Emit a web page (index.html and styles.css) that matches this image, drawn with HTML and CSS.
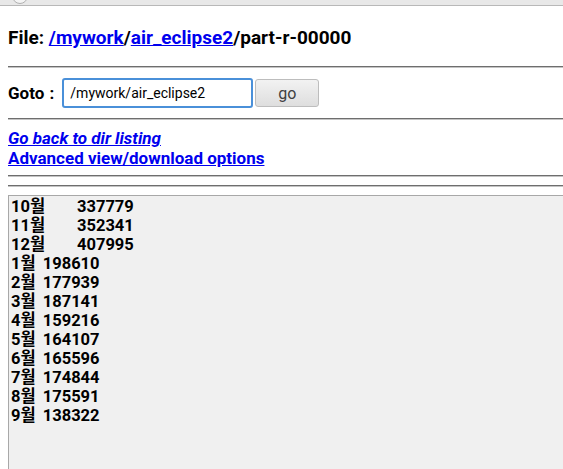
FILE: index.html
```html
<!DOCTYPE html>
<html lang="ko">
<head>
<meta charset="utf-8">
<title>part-r-00000</title>
<link rel="stylesheet" href="styles.css">
</head>
<body>
<div class="chrome"><span class="chrome-dot"></span></div>
<main class="page">
  <h1 class="title">File: <a href="#">/mywork</a>/<a href="#">air_eclipse2</a>/part-r-00000</h1>
  <hr class="rule rule-a">
  <form class="goto">
    <label class="goto-label" for="dir">Goto :</label>
    <input class="goto-input" id="dir" type="text" value="/mywork/air_eclipse2">
    <button class="goto-btn" type="button">go</button>
  </form>
  <hr class="rule rule-b">
  <div class="links">
    <a class="link-back" href="#">Go back to dir listing</a>
    <a class="link-adv" href="#">Advanced view/download options</a>
  </div>
  <hr class="rule rule-c">
  <hr class="rule rule-d">
  <pre class="content">10월	337779
11월	352341
12월	407995
1월 198610
2월 177939
3월 187141
4월 159216
5월 164107
6월 165596
7월 174844
8월 175591
9월 138322
</pre>
</main>
</body>
</html>
```
FILE: styles.css
```css
html, body {
  margin: 0;
  padding: 0;
  background: #ffffff;
  overflow: hidden;
}
body {
  font-family: Roboto, "Noto Sans CJK KR", sans-serif;
  color: #000;
}
.chrome {
  height: 5px;
  background: #e8e8e8;
  border-bottom: 1px solid #b8b8b8;
  position: relative;
  overflow: hidden;
}
.chrome-dot {
  position: absolute;
  left: 12px;
  top: -12px;
  width: 14px;
  height: 14px;
  border: 1px solid #b0b0b0;
  border-radius: 50%;
  background: #f4f4f4;
}
.page {
  padding-left: 8px;
}
.title {
  margin: 20px 0 0 0;
  font-size: 19px;
  line-height: 24px;
  font-weight: bold;
}
.title a { color: #0000ee; }
.rule {
  margin: 0;
  height: 0;
  border: 0;
  border-top: 1px solid #6e6e6e;
  border-bottom: 1px solid #c4c4c4;
}
.rule-a { margin-top: 16px; }
.goto {
  margin: 10px 0 0 0;
  display: flex;
  align-items: center;
  height: 30px;
}
.goto-label {
  font-size: 17px;
  font-weight: bold;
  margin-right: 8px;
  word-spacing: 1px;
}
.goto-input {
  box-sizing: border-box;
  width: 191px;
  height: 30px;
  border: 2px solid #4a90d9;
  border-radius: 3px;
  padding: 0 0 0 6px;
  font-family: Roboto, sans-serif;
  font-size: 14px;
  color: #000;
  outline: none;
}
.goto-btn {
  box-sizing: border-box;
  margin-left: 2px;
  width: 64px;
  height: 28px;
  border: 1px solid #bdbdbd;
  border-radius: 3px;
  background: linear-gradient(#f2f2f2, #dedede);
  font-family: Roboto, sans-serif;
  font-size: 16px;
  color: #404040;
  padding: 0;
}
.rule-b { margin-top: 10px; }
.links {
  margin-top: 8px;
  display: flex;
  flex-direction: column;
  align-items: flex-start;
  font-size: 17px;
  line-height: 20px;
  font-weight: bold;
}
.links a { color: #0000ee; }
.link-back { font-style: italic; }
.rule-c { margin-top: 7px; }
.rule-d { margin-top: 8px; }
.content {
  margin: 8px 0 0 0;
  height: 300px;
  border: 1px solid #a8a8a8;
  border-right: 0;
  background: #f0f0f0;
  padding: 1px 2px;
  font-family: Roboto, "Noto Sans CJK KR", sans-serif;
  font-size: 16.5px;
  font-weight: bold;
  line-height: 19px;
  word-spacing: 3px;
  tab-size: 66px;
}
```
